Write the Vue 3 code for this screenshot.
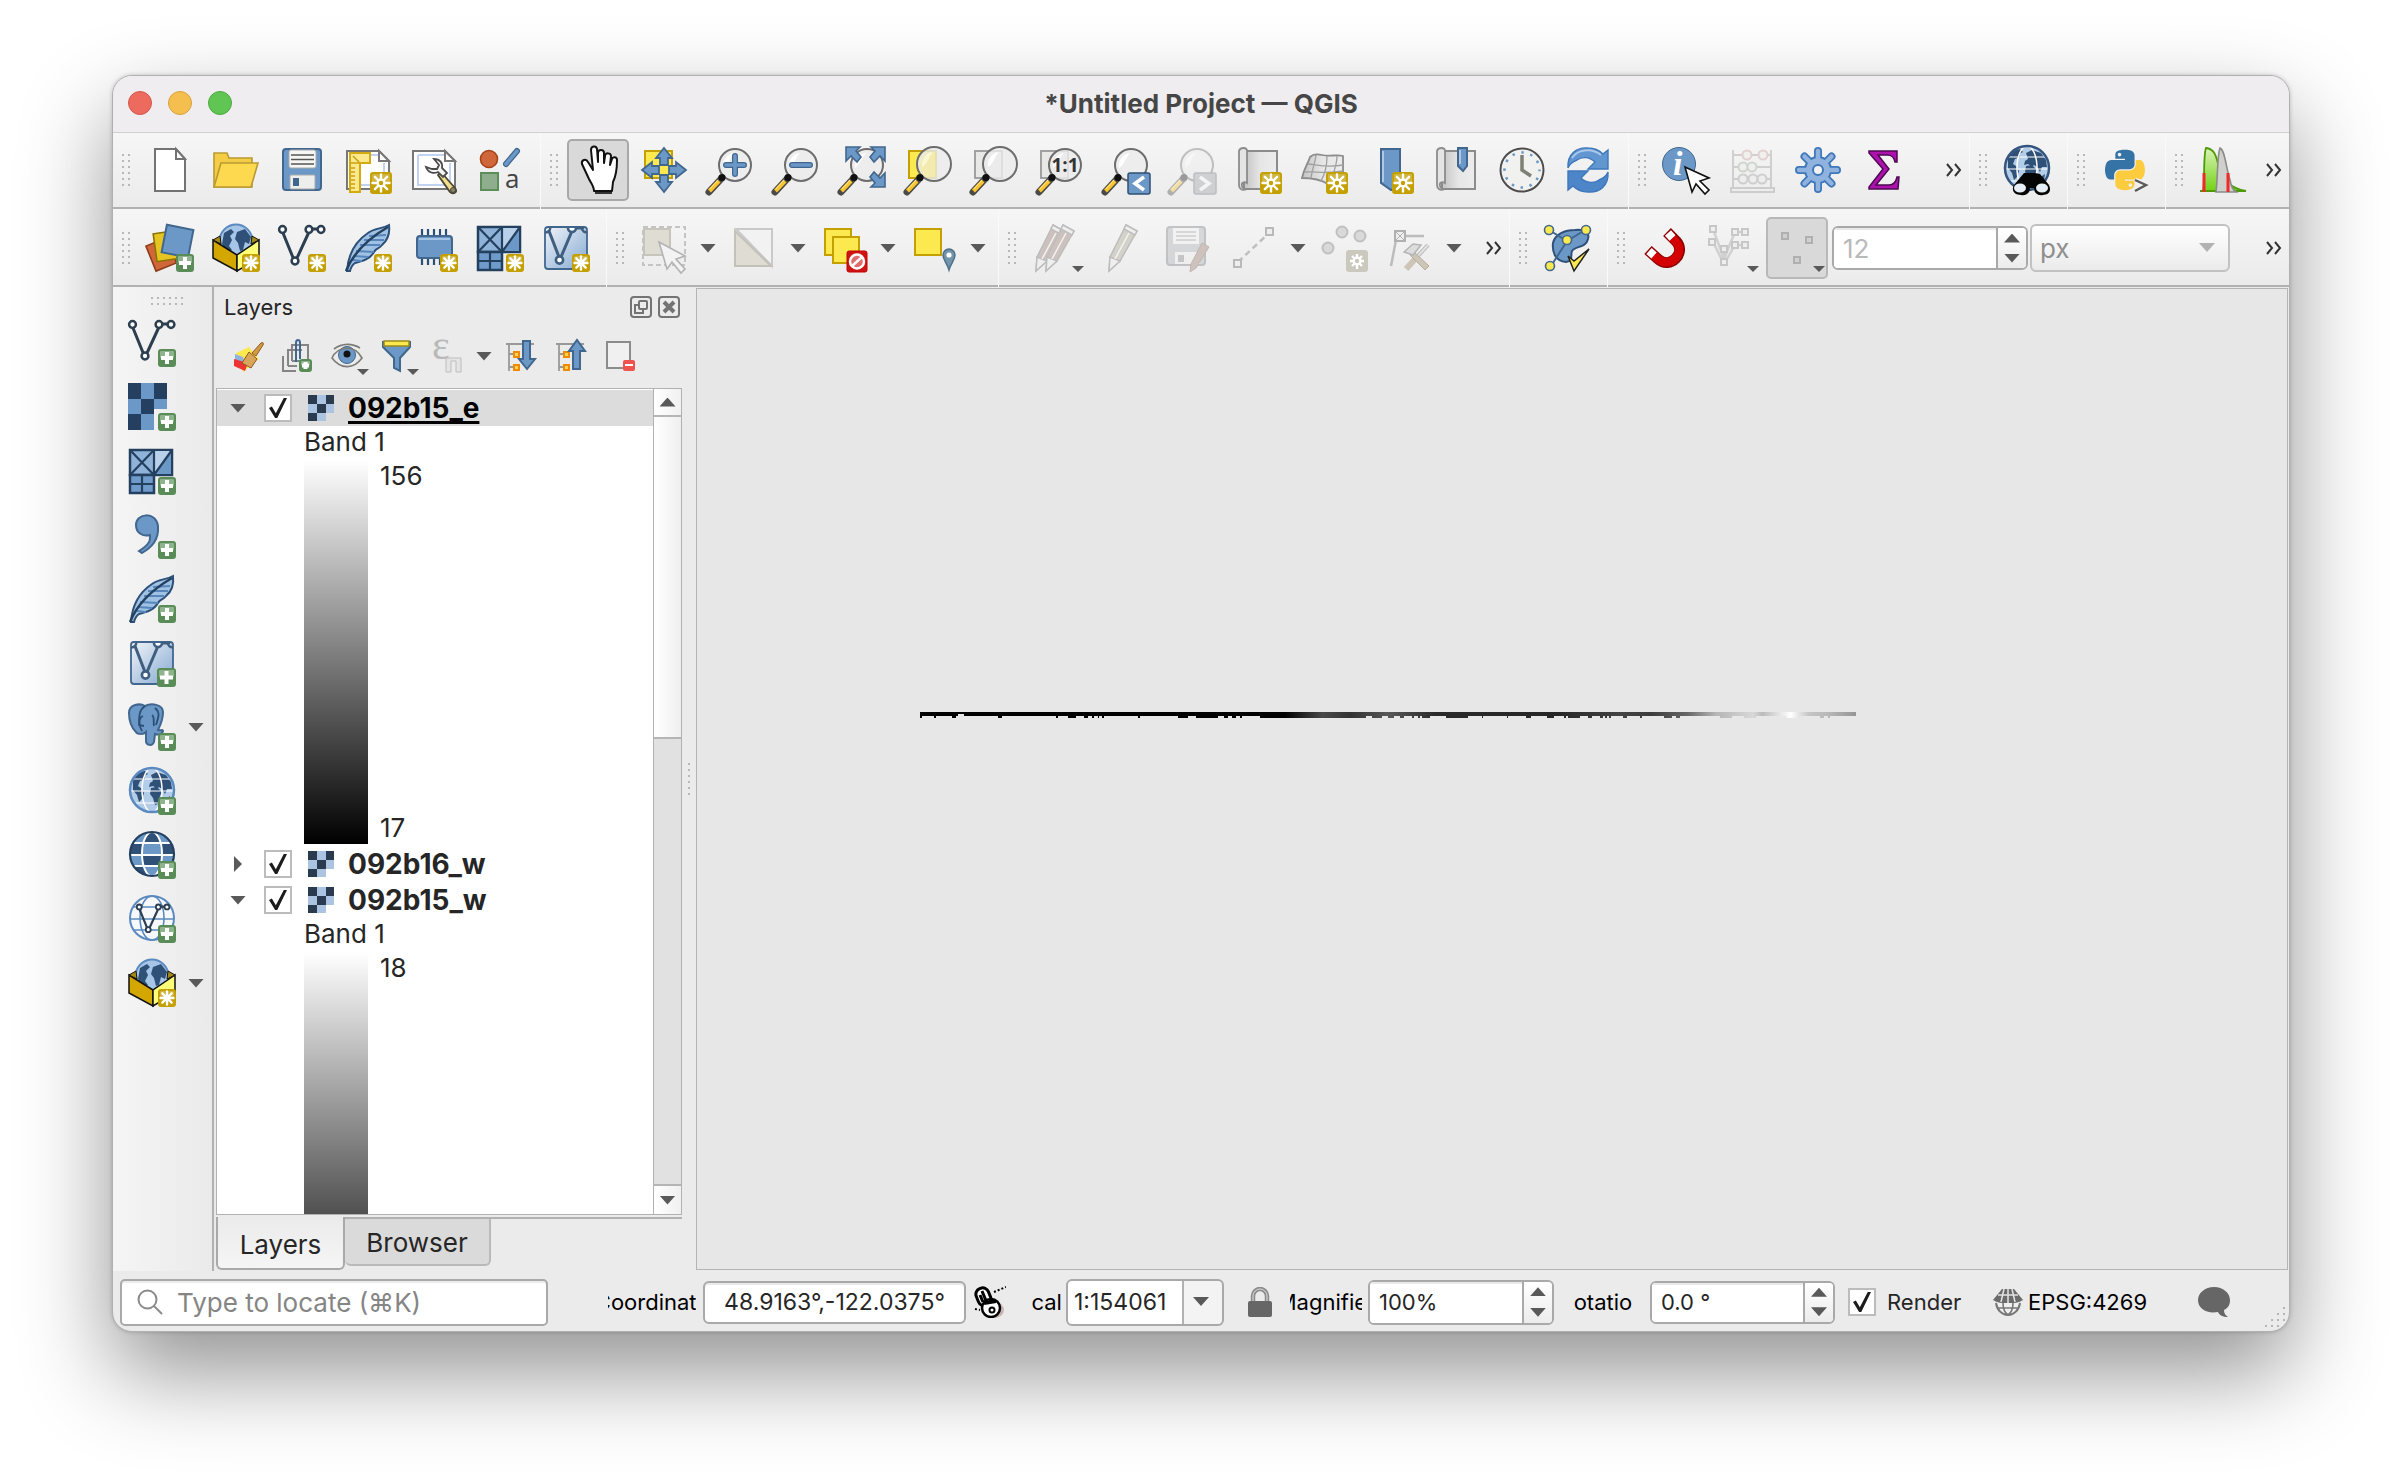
<script setup>
import { ref } from 'vue'

/* ---------- shared pieces of the icon artwork ---------- */
const blue = 'fill="#6b98c6" stroke="#41678f" stroke-width="2"'
const line = (c, w) => `fill="none" stroke="${c}" stroke-width="${w}"`

const plus = (x = 30, y = 30, s = 18) => {
  const m = s / 2
  return `<rect x="${x}" y="${y}" width="${s}" height="${s}" rx="3" fill="#5a8c57"/>
  <rect x="${x + 2}" y="${y + 2}" width="${s - 4}" height="${m - 2}" rx="1" fill="#8fb38d"/>
  <path d="M${x + m} ${y + 3}v${s - 6}M${x + 3} ${y + m}h${s - 6}" stroke="#fff" stroke-width="4"/>`
}
const star = (x = 30, y = 30, s = 18) => {
  const cx = x + s / 2, cy = y + s / 2, r = s / 2 - 2.5, d = r * 0.72
  return `<rect x="${x}" y="${y}" width="${s}" height="${s}" rx="3" fill="#c4a000"/>
  <rect x="${x + 2}" y="${y + 2}" width="${s - 4}" height="${s / 2 - 2}" rx="1" fill="#d0b440"/>
  <path d="M${cx} ${cy - r}v${2 * r}M${cx - r} ${cy}h${2 * r}M${cx - d} ${cy - d}l${2 * d} ${2 * d}M${cx + d} ${cy - d}l${-2 * d} ${2 * d}" stroke="#fff" stroke-width="2.4" stroke-linecap="round"/>`
}
const gearBadge = (x = 26, y = 26) => `${star(x, y, 22)}
  <circle cx="${x + 11}" cy="${y + 11}" r="3.4" fill="#c4a000" stroke="#fff" stroke-width="2.4"/>`

const lens = (cx = 29, cy = 19, r = 16) => `
  <path d="M15 33 3 46" stroke="#4a4a4a" stroke-width="7" stroke-linecap="round"/>
  <path d="M13 35 3.500 45" stroke="#fcc42c" stroke-width="4"/>
  <path d="M12 34 4 43" stroke="#fdeaa0" stroke-width="1"/>
  <circle cx="${cx}" cy="${cy}" r="${r}" fill="#ececec" fill-opacity=".82" stroke="#6d6d6d" stroke-width="2"/>
  <path d="M${cx - 12} ${cy + 3}a12 13 0 0 1 11-15c-5 5-5 12-11 15" fill="#fff" opacity=".9"/>
  <circle cx="16" cy="31.500" r="3.600" fill="#111"/>`

const land = `
  <path d="M5 13c3-6 9-9 12-9l3 3-4 2 1 3-5 2-2 5 3 2 3 5-2 6-3 3-2-7-4-5zM23 8l6-3 9 3 5 7 1 7-5 0-2 5-3-5-3-2-2 2-4-3-4 1 1-4 3-2zM23 21l6-1 5 5-2 4-2 8-3 1-2-7-3-4zM39 31l3-2-1 6-3 1z" fill="#2f5178"/>`
const globe = (ring = '#5a8ac0') => `
  <circle cx="24" cy="23" r="22" fill="#b3cde9"/>${land}
  <ellipse cx="24" cy="23" rx="10" ry="22" ${line('#fff', 1.5)}/>
  <path d="M2 24h44M6 12h36M6 36h36" ${line('#fff', 1.2)}/>
  <circle cx="24" cy="23" r="22" ${line(ring, 2.5)}/>`

const box = `
  <circle cx="24" cy="17" r="16.500" fill="#a7c5e6" stroke="#5a8ac0" stroke-width="2"/>
  <path d="M12 9l7-4 3 3-4 4 2 4-3 6 3 4-4 3-6-9zM25 8l8-3 6 8-2 7-4-2-2 8-3 1-2-8-3-4z" fill="#2f5178"/>
  <path d="M1 16l24 15v16L1 34z" fill="#d3a600" stroke="#111" stroke-width="1.500"/>
  <path d="M47 16L25 31v16l22-13z" fill="#ffff78" stroke="#111" stroke-width="1.500"/>
  <path d="M1 16l7-4 1 8zM47 16l-7-4-1 8z" fill="#a58a18" stroke="#111" stroke-width="1"/>`

const vee = `
  <path d="M5 9l11 27M19 34L31 8M34 5h7" ${line('#2c3e50', 3)}/>
  <g fill="#fff" stroke="#2c3e50" stroke-width="2.500"><circle cx="4.500" cy="5.500" r="3.400"/><circle cx="17" cy="37" r="3.400"/><circle cx="31" cy="5.500" r="3.400"/><circle cx="43" cy="5.500" r="3.400"/></g>`

const feather = `
  <path d="M3 47C4 32 9 19 24 9c6-5 14-4 21-8 1 8-1 15-7 20-3 4-6 3-8 7-4 7-11 9-19 11-3 2-4 4-5 8z" fill="#9fc1e4" stroke="#2c4f78" stroke-width="2"/>
  <path d="M12 27l18 1M16 21l20 0M20 16l20 0M25 12l17-1M10 32l14 1M9 36l9 1" ${line('#5686bb', 2)}/>
  <path d="M2 47C8 32 20 17 44 3" ${line('#24415f', 2.5)}/>`

const mesh = `
  <rect x="2" y="3" width="42" height="25" fill="#8fb2d8" stroke="#24405f" stroke-width="2.500"/>
  <path d="M27 4h16L27 27z" fill="#b8d0ea"/><path d="M43 5v22H28z" fill="#6b98c6"/>
  <rect x="2" y="28" width="24" height="18" fill="#6f9bcb" stroke="#24405f" stroke-width="2.500"/>
  <path d="M2 3l24 25M2 28L26 3M26 28L44 3M26 3v25M14 28v18M2 37h24" ${line('#24405f', 2.2)}/>`

const virtualLayer = `
  <rect x="3" y="3" width="42" height="42" rx="3" fill="url(#virtualFill)" stroke="#41678f" stroke-width="1.800"/>
  <path d="M7 7l10 26M19 33L30 7M33 4h9" ${line('#3e5f80', 3)}/>
  <g fill="#fff" stroke="#3e5f80" stroke-width="2.600"><path d="M3 8a4 4 0 0 0 5-5M26 4a4 4 0 0 0 8 0M40 4a4 4 0 0 0 5 4"/><circle cx="17.500" cy="36" r="3.600"/></g>`

const pencil = (dx = 0, fill = '#d4d2c8') => `
  <g transform="translate(${dx} 0)" stroke="#bdbdbd" stroke-width="1.500">
  <path d="M28 1l11 6-17 30-11 10 1-14z" fill="${fill}"/><path d="M28 1l11 6-2 4-11-6zM12 33l10 4-11 10z" fill="#efefef"/><path d="M31 9L17 35" fill="none" stroke="#f2f2f2"/></g>`

const scroll = `
  <path d="M10 5h33v38H10z" fill="url(#greyFill)" stroke="#8c8c8c" stroke-width="2"/>
  <path d="M5 5c1-4 8-4 8 0v32c-3-2-6 0-5 3 0 2 3 3 5 3-5 2-8 0-8-4z" fill="#e4e4e4" stroke="#8c8c8c" stroke-width="1.800"/>`

const page = `
  <path d="M3 5h32l10 10v28H3z" fill="#fff" stroke="#777" stroke-width="2"/>
  <path d="M8 9h26M8 9v30h32V17" ${line('#c1d2f2', 2)}/><path d="M35 5v10h10z" fill="#fff" stroke="#777" stroke-width="2"/>`

const upArrow = '<path d="M24 2l8 10h-4v7h-8v-7h-4z"/>'

const icons = {
  newDoc: `<path d="M9 3h21l9 10v32H9z" fill="#fff" stroke="#737373" stroke-width="2"/><path d="M30 3v10h9z" fill="#fff" stroke="#737373" stroke-width="2"/>`,
  open: `<path d="M2 41V7h13l2 5h23v29z" fill="#f3cd45" stroke="#b99a32" stroke-width="1.600"/><path d="M9 17h37l-7 24H2z" fill="#fcd94f" stroke="#b99a32" stroke-width="1.600"/>`,
  save: `<rect x="5" y="3" width="38" height="41" rx="3" ${blue}/><rect x="11" y="4" width="27" height="18" rx="2" fill="#f6f6f4" stroke="#aaa"/>
    <path d="M13 9h23M13 13.500h23M13 18h23" ${line('#555', 1.6)}/><rect x="12" y="29" width="25" height="14" rx="1" fill="#eeeeec" stroke="#aaa"/><rect x="15" y="32" width="6" height="8" fill="#41678f"/>`,
  layoutNew: `${page}<path d="M6 7h20v10H16v29H6z" fill="#fce98e" stroke="#d3ab10" stroke-width="2"/><path d="M7 17l8 0M9 10l6 6M7 22h4M7 26h4M7 30h4M7 34h4M7 38h4M7 42h4" ${line('#c9a211', 1.5)}/>${gearBadge()}`,
  layouts: `${page}<path d="M31 26l14 16c3 4-1 7-5 4L28 29z" fill="#f0dc8c" stroke="#4a4636" stroke-width="1.800"/>
    <path d="M16 21c2 6 8 7 12 5l5 5 4-4-5-5c1-5-2-9-8-9l5 6-2 4-5 0z" fill="#f4f4f4" stroke="#4c4c4c" stroke-width="1.800"/><circle cx="43" cy="44" r="2.500" fill="#8a8468" stroke="#4a4636"/>`,
  styles: `<circle cx="13" cy="13" r="8.500" fill="#d0673a" stroke="#a8441a" stroke-width="1.600"/><path d="M30 18L41 5" stroke="#41678f" stroke-width="6" stroke-linecap="round"/><path d="M30 18L41 5" stroke="#6b98c6" stroke-width="3.500" stroke-linecap="round"/>
    <rect x="5" y="27" width="17" height="17" fill="#8fae8d" stroke="#5c8e5a" stroke-width="2"/><text x="29" y="42" font-family="Open Sans, sans-serif" font-size="26" fill="#444">a</text>`,
  hand: `<path d="M20 45c0-5-3-8-5-12L8 18c-1-4 4-6 6-2l5 8-2-20c0-4 5-5 6-1l1 13V7c0-4 6-4 6 0v10l1-7c0-4 6-3 6 0l-1 9 2-6c1-3 5-2 5 1 0 8-1 16-4 22l-1 9z" fill="#fff" stroke="#111" stroke-width="2" stroke-linejoin="round"/><path d="M21 47h17" stroke="#333" stroke-width="2"/>`,
  panSel: `<rect x="5" y="5" width="27" height="27" fill="#fce94f" stroke="#c4a000" stroke-width="2"/><g fill="#6b98c6" stroke="#41678f" stroke-width="1.800">${upArrow}<g transform="rotate(90 24 24)">${upArrow}</g><g transform="rotate(180 24 24)">${upArrow}</g><g transform="rotate(270 24 24)">${upArrow}</g></g>`,
  zoomIn: `${lens()}<path d="M29 10v18M20 19h18" stroke="#41678f" stroke-width="6" stroke-linecap="round"/><path d="M29 10v18M20 19h18" stroke="#6b98c6" stroke-width="3.500" stroke-linecap="round"/>`,
  zoomOut: `${lens()}<path d="M20 19h18" stroke="#41678f" stroke-width="6" stroke-linecap="round"/><path d="M20 19h18" stroke="#6b98c6" stroke-width="3.500" stroke-linecap="round"/>`,
  zoomFull: `${lens()}<g fill="#6b98c6" stroke="#41678f" stroke-width="1.600"><path d="M8 1h14l-4 4 5 6-4 5-6-6-5 5z"/><path d="M47 1H33l4 4-5 6 4 5 6-6 5 5z"/><path d="M47 41H33l4-4-5-6 4-5 6 6 5-5z"/></g>`,
  zoomSel: `<rect x="5" y="5" width="27" height="27" fill="#fce94f" stroke="#c4a000" stroke-width="2"/>${lens(30, 18, 17)}<path d="M28 6h4v25h-10c-8-6-8-20 6-25z" fill="#fce94f" opacity=".25"/>`,
  zoomLayer: `<rect x="5" y="5" width="27" height="27" fill="#e8e8e6" stroke="#999" stroke-width="1.800"/>${lens(30, 18, 17)}`,
  zoomNative: `<rect x="5" y="5" width="27" height="27" fill="#e8e8e6" stroke="#999" stroke-width="1.800"/>${lens()}<text x="29" y="26" text-anchor="middle" font-family="Open Sans, sans-serif" font-weight="700" font-size="19" fill="#333">1:1</text>`,
  zoomLast: `${lens()}<rect x="26" y="27" width="22" height="21" rx="2" fill="#6b98c6" stroke="#2f4f73" stroke-width="1.500"/><path d="M42 31l-9 6.500 9 6.500" ${line('#fff', 3.5)}/>`,
  zoomNext: `${lens()}<rect x="26" y="27" width="22" height="21" rx="2" fill="#9aa0a6" stroke="#6d7276" stroke-width="1.500"/><path d="M32 31l9 6.500-9 6.500" ${line('#fff', 3.5)}/>`,
  newMap: `${scroll}${gearBadge()}`,
  new3d: `<path d="M2 32C4 22 8 18 10 11c3-3 8-3 12-2 8 2 14-1 21 1v20L28 38C20 33 10 32 2 32z" fill="url(#greyFill)" stroke="#8c8c8c" stroke-width="1.800"/><path d="M8 18c10 1 20 4 35 1M5 26c10-1 18 2 38-1M16 9c-1 8-4 15-5 23M27 10c0 9-2 18-6 25M37 10c0 9-3 14-6 26" ${line('#a0a0a0', 1.3)}/>${gearBadge()}`,
  bookmarkNew: `<path d="M15 3h19v36l-9 5-10-7z" ${blue}/><path d="M17 5v31" stroke="#c6d9ee" stroke-width="1.500"/>${gearBadge()}`,
  bookmarks: `${scroll}<path d="M26 2h9v18l-4 5-5-5z" ${blue}/><path d="M28 4v14" stroke="#c6d9ee" stroke-width="1.500"/>`,
  clock: `<circle cx="24" cy="24" r="21.500" fill="#f1f1ef" stroke="#4c4c4c" stroke-width="2"/><circle cx="24" cy="24" r="17.500" fill="none" stroke="#6b98c6" stroke-width="2.500" stroke-dasharray="2.500 6.660" stroke-dashoffset="1.200"/><path d="M24 9v15l9 6" ${line('#7d8075', 3.5)}/>`,
  refresh: `<path d="M4 22C3 8 13 1 24 2c8 0 12 3 15 6l5-4v19H24l7-7c-6-6-14-5-18-2-5 2-8 5-9 8z" fill="#6296d0" stroke="#3f78ba" stroke-width="1.400"/><path d="M44 26c1 14-9 21-20 20-8 0-12-3-15-6l-5 4V25h20l-7 7c6 6 14 5 18 2 5-2 8-5 9-8z" fill="#4d86c8" stroke="#3f78ba" stroke-width="1.400"/><path d="M8 12c5-8 19-11 29-3" ${line('#a9c8ea', 2)}/>`,
  identify: `<circle cx="17" cy="18" r="16.500" fill="#6b98c6" stroke="#41678f"/><text x="11" y="29" font-family="Liberation Serif, serif" font-style="italic" font-weight="700" font-size="34" fill="#fff">i</text><path d="M23 21l24 11-9 3 9 9-4 4-9-10-4 8z" fill="#fff" stroke="#111" stroke-width="1.600"/>`,
  abacus: `<g fill="none" stroke="#999" stroke-width="2"><path d="M5 4v38M43 4v38M5 9h38M5 21h38M5 33h38"/><rect x="3" y="42" width="43" height="4"/></g><g fill="#ececea" stroke="#999" stroke-width="2"><circle cx="19" cy="9" r="4.500" stroke="#c99a9a"/><circle cx="35" cy="9" r="4.500" stroke="#c99a9a"/><circle cx="15" cy="21" r="4.500" stroke="#9aa896"/><circle cx="24" cy="21" r="4.500" stroke="#9aa896"/><circle cx="15" cy="33" r="4.500"/><circle cx="25" cy="33" r="4.500"/><circle cx="34" cy="33" r="4.500"/></g>`,
  gear: `<g stroke="#3f78ba" stroke-width="8" stroke-linecap="round"><path d="M24 5v38M5 24h38M10.500 10.500l27 27M37.500 10.500l-27 27"/></g><circle cx="24" cy="24" r="14" fill="#3f78ba"/><g stroke="#8fb2de" stroke-width="4.500" stroke-linecap="round"><path d="M24 5v38M5 24h38M10.500 10.500l27 27M37.500 10.500l-27 27"/></g><circle cx="24" cy="24" r="12" fill="#8fb2de"/><circle cx="24" cy="24" r="5" fill="#f1f1f1" stroke="#3f78ba" stroke-width="2"/>`,
  sigma: `<path d="M9 5h28v11h-2c-1-5-3-7-8-7H18l11 14-13 16h13c5 0 7-3 8-8h2l-1 12H9v-2l14-18L9 7z" fill="#ad12ad" stroke="#4d0a52" stroke-width="1.500"/>`,
  metasearch: `<g transform="translate(0 -1)">${globe('#33557f')}</g><path d="M21 27l6 0 5 0 5 1 9 11c3 7-1 10-6 10-5 1-9-2-9-7h-4c0 5-4 8-9 7-7 0-10-5-7-10z" fill="#050505"/><ellipse cx="17" cy="42" rx="6" ry="4.500" fill="#e8eef5"/><ellipse cx="39" cy="42" rx="6" ry="4.500" fill="#e8eef5"/>`,
  python: `<g transform="translate(-1 3) scale(.39)"><path fill="#3572a5" d="M63.391 1.988c-4.222.02-8.252.379-11.800 1.007-10.450 1.846-12.346 5.710-12.346 12.837v9.411h24.693v3.137H29.977c-7.176 0-13.460 4.313-15.426 12.521-2.268 9.405-2.368 15.275 0 25.096 1.755 7.311 5.947 12.519 13.124 12.519h8.491V67.234c0-8.151 7.051-15.340 15.426-15.340h24.665c6.866 0 12.346-5.654 12.346-12.548V15.833c0-6.693-5.646-11.720-12.346-12.837-4.244-.706-8.645-1.027-12.866-1.008zM50.037 9.557c2.550 0 4.634 2.117 4.634 4.721 0 2.593-2.083 4.690-4.634 4.690-2.560 0-4.633-2.097-4.633-4.690-.001-2.604 2.073-4.721 4.633-4.721z"/><path fill="#fdcb3e" d="M91.682 28.380v10.966c0 8.500-7.208 15.655-15.426 15.655H51.591c-6.756 0-12.346 5.783-12.346 12.549v23.515c0 6.691 5.818 10.628 12.346 12.547 7.816 2.297 15.312 2.713 24.665 0 6.216-1.801 12.346-5.423 12.346-12.547v-9.412H63.938v-3.138h37.012c7.176 0 9.852-5.005 12.348-12.519 2.578-7.735 2.467-15.174 0-25.096-1.774-7.145-5.161-12.521-12.348-12.521h-9.268zM77.809 87.927c2.561 0 4.634 2.097 4.634 4.692 0 2.602-2.074 4.719-4.634 4.719-2.550 0-4.633-2.117-4.633-4.719 0-2.595 2.083-4.692 4.633-4.692z"/></g><path d="M34 34l11 5-11 6" ${line('#f1f1f1', 5)}/><path d="M34 34l11 5-11 6" ${line('#5a5a5a', 2.4)}/>`,
  histogram: `<path d="M1 45h3C6 38 4 10 7 2c8 1 10 7 12 16 4 16 14 25 28 27z" fill="url(#greenFill)" stroke="#4e9a06" stroke-width="1.800"/><path d="M17 46C19 30 18 10 21 2c5 2 6 20 10 32 1 6 3 10 6 12z" fill="#cfd0cc" stroke="#8a8c87" stroke-width="1.600"/><path d="M5 27v19M29 27v19" stroke="#ef2929" stroke-width="3"/>`,

  dataSource: `<g stroke-width="1.600"><rect x="4" y="17" width="22" height="27" fill="#d0673a" stroke="#8f3c18" transform="rotate(-22 15 30)"/><rect x="9" y="8" width="24" height="28" fill="#e6c422" stroke="#8c7400" transform="rotate(-8 21 22)"/><rect x="18" y="3" width="27" height="28" ${blue} transform="rotate(11 31 17)"/></g>${plus()}`,
  gpkg: `${box}${star()}`,
  shape: `${vee}${star()}`,
  spatialite: `${feather}${star()}`,
  chip: `<path d="M12 5v36M18 5v36M24 5v36M30 5v36M36 5v36" ${line('#2c4f78', 2.2)}/><rect x="7" y="12" width="35" height="22" rx="3" ${blue}/><path d="M9 15h31" stroke="#a4c2e2" stroke-width="2"/>${star()}`,
  meshNew: `${mesh}${star()}`,
  virtualNew: `${virtualLayer}${star()}`,
  select: `<rect x="3" y="3" width="42" height="38" fill="none" stroke="#c4c4c4" stroke-width="2" stroke-dasharray="5 3"/><rect x="4" y="5" width="26" height="26" fill="#dedcd3" stroke="#c6c4bb" stroke-width="2"/><path d="M19 18l26 14-9 3 9 10-4 4-9-11-5 7z" fill="#f3f3f3" stroke="#b3b3b3" stroke-width="1.600"/>`,
  selectValue: `<path d="M6 5h36v37z" fill="#f2f2f2" stroke="#c9c9c9" stroke-width="2"/><path d="M5 7v35h36z" fill="#dedcd3" stroke="#c3c1b8" stroke-width="2"/>`,
  deselect: `<g fill="#fce94f" stroke="#c4a000" stroke-width="2"><rect x="5" y="5" width="26" height="26"/><rect x="13" y="13" width="26" height="26"/></g><rect x="27" y="27" width="20" height="21" rx="2" fill="#cc1414" stroke="#c00"/><circle cx="37" cy="37.500" r="7" fill="#e06c6c" stroke="#fff" stroke-width="2.500"/><path d="M32 42l10-9" stroke="#fff" stroke-width="2.500"/>`,
  selectLoc: `<rect x="5" y="5" width="26" height="26" fill="#fce94f" stroke="#c4a000" stroke-width="2"/><path d="M39 46c-2-7-6-10-6-15a6 6 0 0 1 12 0c0 5-4 8-6 15z" fill="#7295ab" stroke="#4c7088" stroke-width="1.500"/><circle cx="39" cy="31" r="2.600" fill="#fff"/>`,
  edits: `${pencil(-7, '#cdc1bd')}${pencil(3, '#cdc1bd')}`,
  pencil: pencil(),
  saveEdits: `<g opacity=".8"><rect x="3" y="3" width="38" height="38" rx="3" fill="#cdd0d3" stroke="#b4b7ba" stroke-width="2"/><rect x="9" y="4" width="26" height="16" fill="#f2f2f2"/><path d="M12 8h20M12 12h20M12 16h20" ${line('#c5c5c5', 1.6)}/><rect x="11" y="28" width="25" height="12" fill="#efefef"/><rect x="14" y="31" width="6" height="7" fill="#bbb"/></g><path d="M38 19l7 4-13 21-6 4 1-8z" fill="#cfc2bc" stroke="#bdb6b3"/>`,
  digitize: `<path d="M8 38L38 10" stroke="#bfbfbf" stroke-width="2.500" stroke-dasharray="6 4"/><g fill="#eee" stroke="#b9b9b9" stroke-width="2"><rect x="4" y="36" width="7" height="7"/><rect x="36" y="4" width="7" height="7"/></g>`,
  points: `<g fill="#d9d9d9" stroke="#c0c0c0" stroke-width="2"><circle cx="22" cy="8" r="5.500"/><circle cx="40" cy="12" r="5.500"/><circle cx="8" cy="24" r="5.500"/></g><g><rect x="26" y="26" width="22" height="22" rx="3" fill="#cbc8bd"/><path d="M37 30v15M30 37h14M32 32l10 10M42 32L32 42" stroke="#fff" stroke-width="2.400"/><circle cx="37" cy="37" r="3.400" fill="#cbc8bd" stroke="#fff" stroke-width="2.400"/></g>`,
  vertex: `<path d="M12 12h26M10 16L5 42" ${line('#bcbcbc', 2.5)}/><rect x="9" y="7" width="10" height="10" fill="#eee" stroke="#b0b0b0" stroke-width="2"/><path d="M10 8l8 8M18 8l-8 8" stroke="#b0b0b0"/><path d="M42 21L30 34" stroke="#b5b5b5" stroke-width="4"/><path d="M42 21L30 34" stroke="#e4e4e4" stroke-width="2"/><path d="M31 33L20 45" stroke="#cdc6b6" stroke-width="6"/><path d="M28 28l15 14-4 4-15-15z" fill="#cdc6b6" stroke="#b5b0a4"/><path d="M18 28l9-8 8 1-8 10z" fill="#ddd" stroke="#b5b5b5" stroke-width="1.500"/>`,
  topology: `<path d="M10 19c2-9 12-13 22-13 9-1 15 2 13 9-2 9-13 7-16 12-2 5 2 10-6 11-11-1-14-10-13-19z" fill="#6b98c6" stroke="#2f5178" stroke-width="2"/><path d="M6 6l18 11L42 6M24 17L8 42" ${line('#41678f', 2)}/><g fill="#fce94f" stroke="#41678f" stroke-width="1.600"><circle cx="6" cy="6" r="4.500"/><circle cx="43" cy="6" r="4.500"/><circle cx="24" cy="16" r="4.500"/><circle cx="7" cy="42" r="4.500"/></g><path d="M25 32l6 5 15-12-15 22z" fill="#fce94f" stroke="#222" stroke-width="1.500"/>`,
  magnet: `<path d="M7 26L17 35C29 46 46 29 35 17L26 8" ${line('#8c0000', 11)}/><path d="M8 27L17 35C29 45 45 29 35 18L27 9" ${line('#d40000', 8.5)}/><path d="M8 27l5 4.500M27 9l4.500 5" ${line('#fff', 8)}/>`,
  snapAll: `<g opacity=".8"><path d="M6 5l11 30L28 8h10M6 18l11 22L28 21h10M17 26l0 12" ${line('#c9c9c9', 2.5)}/><g fill="#eee" stroke="#bdbdbd" stroke-width="2"><rect x="3" y="2" width="6" height="6"/><rect x="25" y="5" width="6" height="6"/><rect x="35" y="5" width="6" height="6"/><rect x="2" y="15" width="6" height="6"/><rect x="25" y="18" width="6" height="6"/><rect x="35" y="18" width="6" height="6"/><rect x="14" y="22" width="6" height="6"/><rect x="14" y="35" width="6" height="6"/></g></g>`,
  snapVertex: `<g fill="#d0d0d0" stroke="#b0b0b0" stroke-width="2"><rect x="9" y="9" width="6" height="6"/><rect x="33" y="13" width="6" height="6"/><rect x="21" y="33" width="6" height="6"/></g>`,

  addVector: `${vee}${plus()}`,
  addRaster: `<path d="M0 0h39v26H26v21H0z" fill="#6b98c6"/><path d="M0 0h13v16H0zM26 0h13v16H26zM13 16h13v15H13zM0 31h13v16H0z" fill="#243f5f"/>${plus()}`,
  addMesh: `${mesh}${plus()}`,
  addCsv: `<path d="M11 40c8-5 12-9 11-16-7 2-14-2-14-10 0-12 20-14 22 1 1 14-6 21-16 27z" ${blue}/>${plus()}`,
  addSpatialite: `${feather}${plus()}`,
  addVirtual: `${virtualLayer}${plus(29, 29, 19)}`,
  addPostgis: `<path d="M1 10C1 1 12 0 17 3c6-3 18-2 18 6 0 8-3 14-5 18 3 1 5-1 5 1-1 4-6 4-8 3l-1 8c-2 5-8 3-8-1v-9c-3 3-9 2-10 0C3 24 1 16 1 10z" ${blue}/><path d="M17 3c-6 4-6 10-6 19l5 1M27 5c6 5 3 10 1 17M15 13c-5 2-4 10-1 15M24 12c3 2 1 6 2 11" ${line('#2c4f78', 1.8)}/>${plus()}`,
  addWms: `${globe()}${plus()}`,
  addWcs: `<circle cx="24" cy="23" r="22" fill="#6b98c6"/><path d="M5 12h11l-2 12H2c0-4 1-8 3-12zM32 12h11c2 4 3 8 3 12H34zM14 24h20l-2 11H16zM18 2c4-1 8-1 12 0l3 10H15zM5 35h11l4 9C12 43 8 40 5 35z" fill="#2f5178"/><path d="M2 24h44M5 12h38M5 35h38" ${line('#fff', 2)}/><ellipse cx="24" cy="23" rx="10" ry="22" ${line('#fff', 2)}/><circle cx="24" cy="23" r="22" ${line('#24405f', 2.2)}/>${plus()}`,
  addWfs: `<circle cx="24" cy="23" r="22" fill="#f6f8fb" stroke="#5a8ac0" stroke-width="2"/><path d="M2 24h44M6 12h36M6 35h36" ${line('#5a8ac0', 1.6)}/><ellipse cx="24" cy="23" rx="12" ry="22" ${line('#5a8ac0', 1.6)}/><g transform="translate(8 8) scale(.72)">${vee}</g>${plus()}`,

  brush: `<path d="M4 14l13-6 10 12-16 13z" fill="#fce94f"/><path d="M3 15l8 3 3 10-11-4z" fill="#8fb2de"/><path d="M2 20l14 4-3 8-11-5z" fill="#e33"/><path d="M20 14L29 4c2-1 3 0 2 2l-7 11z" fill="#d59a44" stroke="#8b5b1c"/><path d="M17 13l8 7-6 9-9-5z" fill="#d9a55b" stroke="#8b5b1c"/>`,
  addGroup: `<path d="M1 17v15h13M6 27V11h14M10 22V6h16v18M6 27h9M10 22h8" ${line('#858585', 2)}/><path d="M14 23V4c0-4 4-4 4 0v16" ${line('#41678f', 2)}/>${plus(17, 20, 13)}`,
  eye: `<circle cx="15" cy="16" r="8.500" fill="#6b98c6" stroke="#41678f"/><circle cx="15" cy="15" r="3.500" fill="#111"/><path d="M0 19c5-11 22-15 30 0-8 11-21 12-30 0zM2 10C10 4 20 4 28 9" ${line('#7b7b76', 1.6)}/>`,
  filter: `<path d="M1 3h27v5L18 19v13l-6-3V19L1 8z" ${blue}/><path d="M2 2h25v5H2z" fill="#fce94f" stroke="#9b8a1c" stroke-width="1.500"/>`,
  expression: `<text x="0" y="20" font-family="Liberation Serif, serif" font-size="42" fill="#b9b9b9">ε</text><path d="M14 19h15v14h-5V22h-5v11h-5z" fill="#e4e4e4" stroke="#bdbdbd"/>`,
  expand: `<path d="M0 5h28M3 5v27M3 15h7M3 28h7" ${line('#999', 1.8)}/><path d="M8 13h5v5H8zM8 26h5v5H8z" fill="#fcd34f" stroke="#f08a00" stroke-width="2"/><path d="M17 2h7v18h5l-8 10-8-10h4z" ${blue}/>`,
  collapse: `<path d="M0 5h28M3 5v27M3 15h7M3 28h7" ${line('#999', 1.8)}/><path d="M8 13h5v5H8zM8 26h5v5H8z" fill="#fcd34f" stroke="#f08a00" stroke-width="2"/><path d="M17 30h7V12h5L21 1l-8 11h4z" ${blue}/>`,
  remove: `<rect x="1" y="3" width="23" height="26" fill="#f0f0f0" stroke="#8c8c8c" stroke-width="2"/><rect x="17" y="21" width="12" height="11" rx="2" fill="#ef5350"/><path d="M19 26h8" stroke="#fff" stroke-width="2"/>`
}

/* ---------- toolbars ---------- */
const b = (icon, label, extra = {}) => ({ icon, label, ...extra })
const row1 = [
  { items: [b('newDoc', 'New Project'), b('open', 'Open Project'), b('save', 'Save Project'), b('layoutNew', 'New Print Layout'), b('layouts', 'Layout Manager'), b('styles', 'Style Manager')] },
  { items: [b('hand', 'Pan Map', { on: true }), b('panSel', 'Pan to Selection'), b('zoomIn', 'Zoom In'), b('zoomOut', 'Zoom Out'), b('zoomFull', 'Zoom Full'), b('zoomSel', 'Zoom to Selection'), b('zoomLayer', 'Zoom to Layer'), b('zoomNative', 'Zoom to Native Resolution'), b('zoomLast', 'Zoom Last'), b('zoomNext', 'Zoom Next', { dim: true }), b('newMap', 'New Map View'), b('new3d', 'New 3D Map View'), b('bookmarkNew', 'New Spatial Bookmark'), b('bookmarks', 'Show Spatial Bookmarks'), b('clock', 'Temporal Controller'), b('refresh', 'Refresh')] },
  { more: true, grow: true, items: [b('identify', 'Identify Features'), b('abacus', 'Field Calculator', { dim: true }), b('gear', 'Processing Toolbox'), b('sigma', 'Statistical Summary')] },
  { items: [b('metasearch', 'MetaSearch')] },
  { items: [b('python', 'Python Console')] },
  { more: true, items: [b('histogram', 'Histogram Stretch')] }
]
const row2 = [
  { items: [b('dataSource', 'Data Source Manager'), b('gpkg', 'New GeoPackage Layer'), b('shape', 'New Shapefile Layer'), b('spatialite', 'New SpatiaLite Layer'), b('chip', 'New Temporary Scratch Layer'), b('meshNew', 'New Mesh Layer'), b('virtualNew', 'New Virtual Layer')] },
  { items: [b('select', 'Select Features', { menu: true }), b('selectValue', 'Select by Value', { menu: true }), b('deselect', 'Deselect Features', { menu: true }), b('selectLoc', 'Select by Location', { menu: true })] },
  { more: true, items: [b('edits', 'Current Edits', { corner: true }), b('pencil', 'Toggle Editing'), b('saveEdits', 'Save Layer Edits'), b('digitize', 'Digitize', { menu: true }), b('points', 'Add Point Feature'), b('vertex', 'Vertex Tool', { menu: true })] },
  { items: [b('topology', 'Topology Checker')] },
  { more: true, grow: true, snapping: true, items: [b('magnet', 'Enable Snapping'), b('snapAll', 'Snapping Layers', { corner: true }), b('snapVertex', 'Snapping Type', { corner: true, on: true, soft: true })] }
]
const rows = [row1, row2]
const sideTools = [
  b('addVector', 'Add Vector Layer'), b('addRaster', 'Add Raster Layer'), b('addMesh', 'Add Mesh Layer'), b('addCsv', 'Add Delimited Text Layer'),
  b('addSpatialite', 'Add SpatiaLite Layer'), b('addVirtual', 'Add Virtual Layer'), b('addPostgis', 'Add PostGIS Layer', { menu: true }),
  b('addWms', 'Add WMS Layer'), b('addWcs', 'Add WCS Layer'), b('addWfs', 'Add WFS Layer'), b('gpkg', 'New GeoPackage Layer', { menu: true })
]
const panelTools = [
  b('brush', 'Layer Styling'), b('addGroup', 'Add Group'), b('eye', 'Manage Map Themes', { corner: true }), b('filter', 'Filter Legend', { corner: true }),
  b('expression', 'Filter by Expression', { menu: true }), b('expand', 'Expand All'), b('collapse', 'Collapse All'), b('remove', 'Remove Layer')
]

/* ---------- layer tree ---------- */
const layers = ref([
  { name: '092b15_e', open: true, visible: true, current: true, max: '156', min: '17' },
  { name: '092b16_w', open: false, visible: true, max: '', min: '' },
  { name: '092b15_w', open: true, visible: true, max: '18', min: '' }
])
const render = ref(true)

/* empty cells along the lower edge of the raster: [start, width] */
const gaps = [[2, 12], [16, 16], [36, 42], [82, 54], [138, 10], [156, 8], [168, 4], [174, 4], [179, 3], [184, 34], [220, 38], [268, 8], [298, 6], [308, 4], [316, 4], [322, 4], [326, 14], [446, 6], [462, 6], [474, 6], [484, 8], [494, 4], [500, 2], [510, 16], [548, 14], [563, 24], [588, 18], [611, 16], [634, 8], [642, 2], [646, 2], [660, 8], [672, 8], [683, 2], [687, 2], [691, 12], [707, 13], [722, 22], [752, 4], [760, 40], [812, 12], [836, 30], [880, 20], [904, 4], [910, 26]]
</script>

<template>
  <div class="desktop">
    <svg class="defs" aria-hidden="true">
      <defs>
        <linearGradient id="virtualFill" x1="0" y1="0" x2="1" y2="1"><stop offset="0" stop-color="#f0f4f8" /><stop offset="1" stop-color="#85a9d2" /></linearGradient>
        <linearGradient id="greyFill"><stop offset="0" stop-color="#c4c4c4" /><stop offset=".5" stop-color="#e6e6e6" /><stop offset="1" stop-color="#ececec" /></linearGradient>
        <linearGradient id="greenFill" x1="0" y1="0" x2="0" y2="1"><stop offset="0" stop-color="#d9f3b8" /><stop offset="1" stop-color="#73d216" /></linearGradient>
      </defs>
    </svg>

    <main class="window">
      <header class="titlebar">
        <div class="lights">
          <button class="light close" aria-label="Close"></button>
          <button class="light minimise" aria-label="Minimise"></button>
          <button class="light zoom" aria-label="Zoom"></button>
        </div>
        <h1>*Untitled Project — QGIS</h1>
      </header>

      <div v-for="(row, r) in rows" :key="r" class="toolrow" :class="{ second: r === 1 }">
        <div v-for="(group, g) in row" :key="g" class="group" :class="{ grow: group.grow }">
          <span class="handle"></span>
          <div v-for="item in group.items" :key="item.label" class="toolwrap">
            <button class="tool" :class="{ on: item.on, soft: item.soft }" :aria-label="item.label">
              <svg class="icon" :class="{ dim: item.dim }" viewBox="0 0 48 48" v-html="icons[item.icon]"></svg>
              <i v-if="item.corner" class="tri corner"></i>
            </button>
            <button v-if="item.menu" class="drop" :aria-label="item.label + ' menu'"><i class="tri"></i></button>
          </div>
          <template v-if="group.snapping">
            <div class="spin tolerance">
              <input type="text" value="12" disabled aria-label="Snapping tolerance" />
              <div class="steps"><button aria-label="Increase tolerance"><i class="tri up"></i></button><button aria-label="Decrease tolerance"><i class="tri"></i></button></div>
            </div>
            <div class="combo units">
              <select disabled aria-label="Snapping units"><option>px</option></select><i class="tri pale"></i>
            </div>
          </template>
          <button v-if="group.more" class="more" aria-label="More tools">
            <svg viewBox="0 0 18 14"><path d="M2 1l5 6-5 6M10 1l5 6-5 6" fill="none" stroke="#333" stroke-width="2" /></svg>
          </button>
        </div>
      </div>

      <section class="body">
        <nav class="side" aria-label="Add layers">
          <span class="handle flat"></span>
          <div v-for="item in sideTools" :key="item.label" class="toolwrap">
            <button class="tool" :aria-label="item.label"><svg class="icon" viewBox="0 0 48 48" v-html="icons[item.icon]"></svg></button>
            <button v-if="item.menu" class="drop" :aria-label="item.label + ' menu'"><i class="tri"></i></button>
          </div>
        </nav>

        <aside class="panel">
          <header class="panelhead">
            <h2>Layers</h2>
            <button aria-label="Float panel"><svg viewBox="0 0 22 22"><rect x="1" y="1" width="20" height="20" rx="3" /><rect x="9" y="5" width="8" height="8" rx="1" /><path d="M8 9H5v8h8v-3" /></svg></button>
            <button aria-label="Close panel"><svg viewBox="0 0 22 22"><rect x="1" y="1" width="20" height="20" rx="3" /><path class="heavy" d="M6 6l10 10M16 6L6 16" /></svg></button>
          </header>
          <div class="paneltools">
            <div v-for="item in panelTools" :key="item.label" class="toolwrap">
              <button class="tool small" :aria-label="item.label"><svg class="icon" viewBox="0 0 32 34" v-html="icons[item.icon]"></svg><i v-if="item.corner" class="tri corner"></i></button>
              <button v-if="item.menu" class="drop" :aria-label="item.label + ' menu'"><i class="tri"></i></button>
            </div>
          </div>

          <div class="treeframe">
            <ul class="tree">
              <li v-for="layer in layers" :key="layer.name">
                <div class="layer" :class="{ current: layer.current }">
                  <button class="twist" :aria-label="'Toggle ' + layer.name" @click="layer.open = !layer.open"><i class="tri" :class="{ right: !layer.open }"></i></button>
                  <input :id="layer.name" v-model="layer.visible" type="checkbox" />
                  <svg class="raster" viewBox="0 0 26 26"><path d="M0 0h26v18h-8v8H0z" fill="#aac4e2" /><path d="M0 0h9v9H0zM18 0h8v9h-8zM9 9h9v9H9zM0 18h9v8H0z" fill="#2b3b4f" /></svg>
                  <label :for="layer.name">{{ layer.name }}</label>
                </div>
                <div v-if="layer.open" class="legend">
                  <p>Band 1</p>
                  <div class="ramp"><div class="scale"></div><div class="range"><span>{{ layer.max }}</span><span>{{ layer.min }}</span></div></div>
                </div>
              </li>
            </ul>
            <div class="scrollbar">
              <button aria-label="Scroll up"><i class="tri up"></i></button>
              <div class="track"><div class="thumb"></div></div>
              <button class="down" aria-label="Scroll down"><i class="tri"></i></button>
            </div>
          </div>
          <div class="tabs" role="tablist">
            <button class="tab active" role="tab" aria-selected="true">Layers</button>
            <button class="tab" role="tab" aria-selected="false">Browser</button>
          </div>
        </aside>

        <div class="splitter"></div>

        <div class="canvas">
          <div class="strip">
            <svg viewBox="0 0 936 6" preserveAspectRatio="none" shape-rendering="crispEdges">
              <g fill="#e7e7e7"><rect v-for="gap in gaps" :key="gap[0]" :x="gap[0]" y="4" :width="gap[1]" height="2" /><rect x="38" y="2" width="6" height="4" /></g>
            </svg>
          </div>
        </div>
      </section>

      <footer class="status">
        <div class="locate">
          <svg viewBox="0 0 26 26"><circle cx="10.500" cy="10.500" r="9" /><path d="M17 17l8 8" /></svg>
          <input type="text" placeholder="Type to locate (⌘K)" aria-label="Locate" />
        </div>
        <label class="clip coord" for="coord"><span>Coordinate</span></label>
        <input id="coord" class="field" type="text" value="48.9163°,-122.0375°" />
        <button class="mouse" aria-label="Toggle extents">
          <svg viewBox="0 0 32 32"><ellipse cx="20" cy="24" rx="10" ry="8" fill="#c9b3b3" /><rect x="3" y="2" width="13" height="18" rx="6" transform="rotate(-22 9 11)" fill="#fff" stroke="#000" stroke-width="3" /><path d="M8 5l5 12M6 9l3 7" stroke="#000" stroke-width="3" /><circle cx="17" cy="22" r="9" fill="#fff" stroke="#000" stroke-width="2.500" /><circle cx="18" cy="24" r="2.500" fill="none" stroke="#000" stroke-width="2" /><path d="M10 17l12-2" stroke="#000" stroke-width="4" /><path d="M20 6l12-5M1 23l5 1" stroke="#000" stroke-width="2" stroke-dasharray="2 2" /></svg>
        </button>
        <label class="clip scalelabel" for="scale"><span>Scale</span></label>
        <div class="combo scalebox">
          <select id="scale"><option>1:154061</option></select><i class="tri"></i>
        </div>
        <button class="lock" aria-label="Lock scale">
          <svg viewBox="0 0 24 30"><path d="M5 15V9a7 7 0 0 1 14 0v6" fill="none" stroke="#8b8b8b" stroke-width="4.500" /><path d="M5 15V9a7 7 0 0 1 14 0v6" fill="none" stroke="#ddd" stroke-width="1" /><rect y="14" width="24" height="16" rx="2" fill="#666" /></svg>
        </button>
        <label class="clip maglabel" for="magnifier"><span>Magnifier</span></label>
        <div class="spin mag">
          <input id="magnifier" type="text" value="100%" />
          <div class="steps"><button aria-label="Increase magnifier"><i class="tri up"></i></button><button aria-label="Decrease magnifier"><i class="tri"></i></button></div>
        </div>
        <label class="clip rotlabel" for="rotation"><span>Rotation</span></label>
        <div class="spin rot">
          <input id="rotation" type="text" value="0.0 °" />
          <div class="steps"><button aria-label="Rotate clockwise"><i class="tri up"></i></button><button aria-label="Rotate anticlockwise"><i class="tri"></i></button></div>
        </div>
        <div class="render"><input id="render" v-model="render" type="checkbox" /><label for="render">Render</label></div>
        <button class="crs">
          <svg viewBox="0 0 32 28"><path d="M10 1h12l9 11c-8 5-22 5-30 0z" fill="#6b6b6b" /><path d="M4 15c1 7 6 12 12 12s11-5 12-12" fill="#f0f0f0" stroke="#777" stroke-width="2" /><path d="M12 1L9 14M20 1l3 13M16 1v14M6 7h20" fill="none" stroke="#e4e4e4" stroke-width="1.500" /><path d="M11 15c0 6 2 10 5 12 3-2 5-6 5-12M5 20h22" fill="none" stroke="#777" stroke-width="1.600" /></svg>
          <span>EPSG:4269</span>
        </button>
        <button class="bubble" aria-label="Messages">
          <svg viewBox="0 0 32 30"><path d="M16 0c9 0 16 6 16 13 0 5-2 8-6 10 0 3 1 5 4 7-5 0-9-2-10-5C9 27 0 22 0 13 0 6 7 0 16 0z" fill="#666" /></svg>
        </button>
        <svg class="grip" viewBox="0 0 22 22"><path d="M19 1h2v2h-2zM13 7h2v2h-2zM19 7h2v2h-2zM7 13h2v2H7zM13 13h2v2h-2zM19 13h2v2h-2zM1 19h2v2H1zM7 19h2v2H7zM13 19h2v2h-2z" fill="#b5b5b5" /></svg>
      </footer>
    </main>
  </div>
</template>

<style>
body { background: #fff; }
</style>

<style scoped>
* { box-sizing: border-box; }
.desktop { display: flex; height: 100vh; padding: 75px 112px 148px; font-family: Inter, "Noto Sans", "Noto Sans CJK JP", sans-serif; font-size: 26px; color: #262626; }
.defs { position: absolute; width: 0; height: 0; }
button { padding: 0; border: 0; background: none; font: inherit; color: inherit; }
input, select { font: inherit; color: inherit; }
h1, h2, p, ul { margin: 0; padding: 0; list-style: none; }

.window { flex: 1; min-width: 0; display: flex; flex-direction: column; overflow: hidden; border: 1px solid #b0b0b0; border-radius: 20px; background: #ebebeb; box-shadow: 0 40px 90px rgba(0, 0, 0, .43), 0 0 4px rgba(0, 0, 0, .2); }

.titlebar { display: grid; grid-template-columns: 1fr auto 1fr; align-items: center; flex: none; height: 57px; padding: 0 15px 2px; border-bottom: 1px solid #d0d0d0; background: #efedef; }
.lights { display: flex; gap: 16px; }
.light { width: 24px; height: 24px; border-radius: 50%; border: 1px solid; }
.close { background: #ec6a5e; border-color: #d55549; }
.minimise { background: #f5bf4f; border-color: #d8a13a; }
.zoom { background: #61c554; border-color: #4cab3f; }
h1 { font-size: 26px; font-weight: 700; color: #464646; }

.toolrow { display: flex; gap: 1px; flex: none; height: 76px; background: #fafafa; }
.toolrow.second { height: 78px; }
.group { display: flex; align-items: center; gap: 4px; padding-right: 9px; border-bottom: 2px solid #b1b1b1; background: linear-gradient(#f6f6f6, #ebebeb); }
.second .group { padding-top: 2px; }
.group.grow { flex: 1; }
.group:has(.more) { padding-right: 0; }
.handle { flex: none; width: 8px; height: 32px; margin: 0 5px 0 9px; background: radial-gradient(circle at 1px 1px, #b8b8b8 1px, transparent 1px) 0 0 / 6px 6px; }
.toolwrap { display: flex; align-items: center; flex: none; }
.tool { position: relative; display: grid; place-items: center; width: 62px; height: 62px; border: 2px solid transparent; border-radius: 5px; }
.tool.on { border-color: #a8a8a8; background: #d9d9d9; }
.tool.soft { border-color: #b8b8b8; }
.icon { width: 48px; height: 48px; overflow: visible; }
.icon.dim { opacity: .38; }
.tri { display: block; width: 16px; height: 9px; background: #595959; clip-path: polygon(0 0, 100% 0, 50% 100%); }
.tri.up { clip-path: polygon(50% 0, 100% 100%, 0 100%); }
.tri.right { width: 8px; height: 16px; clip-path: polygon(0 0, 100% 50%, 0 100%); }
.tri.pale { background: #b2b2b2; }
.tri.corner { position: absolute; right: 1px; bottom: 5px; width: 12px; height: 6px; }
.drop { display: grid; place-items: center; width: 24px; height: 40px; padding-left: 2px; }
.more { display: grid; place-items: center; flex: none; width: 31px; height: 40px; margin-left: auto; }
.more svg { width: 18px; height: 14px; }
.second .group:not(.grow) .more { margin-left: 9px; }

.spin { display: flex; flex: none; overflow: hidden; border: 2px solid #a9a9a9; border-radius: 6px; background: #fff; }
.spin input { flex: 1; min-width: 0; padding: 0 0 0 9px; border: 0; background: #fff; box-shadow: inset 0 2px 0 #e9e9e9; }
.steps { display: flex; flex-direction: column; width: 30px; border-left: 2px solid #a9a9a9; background: linear-gradient(#fff, #ececec); }
.steps button { flex: 1; display: grid; place-items: center; }
.tolerance { width: 196px; height: 44px; }
.tolerance input { color: #b9b9b9; }
.combo { position: relative; flex: none; border: 2px solid #a9a9a9; border-radius: 6px; overflow: hidden; background: #fff; }
.combo select { width: 100%; height: 100%; padding: 0 0 0 8px; border: 0; appearance: none; background: none; opacity: 1; }
.combo .tri { position: absolute; top: 50%; right: 13px; margin-top: -5px; pointer-events: none; }
.units { width: 200px; height: 48px; margin-left: -2px; border-color: #c2c2c2; background: linear-gradient(#fff, #ebebeb); }
.units select { color: #8f8f8f; }

.body { flex: 1; min-height: 0; display: flex; }
.side { flex: none; display: flex; flex-direction: column; gap: 2px; width: 101px; padding: 10px 0 0 8px; border-right: 2px solid #b1b1b1; background: linear-gradient(90deg, #f5f5f5, #eaeaea); }
.handle.flat { width: 34px; height: 8px; margin: 0 0 5px 30px; }

.panel { flex: none; display: flex; flex-direction: column; width: 468px; padding-left: 2px; }
.panelhead { flex: none; display: flex; align-items: center; gap: 6px; height: 40px; padding: 0 2px 0 8px; }
h2 { flex: 1; font-size: 22px; font-weight: 400; }
.panelhead button, .panelhead svg { display: block; width: 22px; height: 22px; }
.panelhead svg { fill: none; stroke: #737373; stroke-width: 2; }
.panelhead .heavy { stroke-width: 4; }
.paneltools { flex: none; display: flex; align-items: center; gap: 4px; height: 61px; padding: 0 0 3px 9px; }
.tool.small { width: 46px; height: 46px; }
.small .icon { width: 32px; height: 34px; }
.small .corner { bottom: 2px; right: 0; }

.treeframe { flex: 1; min-height: 0; display: flex; border: 1px solid #b1b1b1; background: #fff; }
.tree { flex: 1; overflow: hidden; padding-top: 1px; }
.layer { display: flex; align-items: center; height: 36px; }
.layer.current { background: #dcdcdc; }
.twist { display: grid; place-items: center; width: 42px; height: 36px; margin-right: 5px; }
.raster { width: 26px; height: 26px; margin: 0 14px 0 16px; }
.layer label { font-size: 28px; font-weight: 700; line-height: 34px; }
.layer.current label { color: #000; text-decoration: underline; text-decoration-thickness: 3px; text-decoration-skip-ink: none; text-underline-offset: 3px; }
input[type="checkbox"] { flex: none; display: grid; place-items: center; appearance: none; width: 28px; height: 28px; margin: 0; border: 2px solid #bcbcbc; background: #fff; }
input[type="checkbox"]:checked::before { content: ""; width: 18px; height: 20px; background: #1c1c1c; clip-path: polygon(0 50%, 16% 42%, 38% 76%, 82% 0, 100% 0, 46% 100%, 34% 100%); }
.legend { padding: 0 0 2px 87px; }
.legend p { height: 34px; line-height: 32px; }
.ramp { display: flex; height: 384px; }
.scale { width: 64px; background: linear-gradient(#fff, #000); }
.range { display: flex; flex-direction: column; justify-content: space-between; padding-left: 12px; line-height: 32px; }

.scrollbar { flex: none; display: flex; flex-direction: column; width: 28px; border-left: 1px solid #b1b1b1; }
.scrollbar button { flex: none; display: grid; place-items: center; height: 28px; border-bottom: 2px solid #b5b5b5; background: linear-gradient(90deg, #fff, #f0f0f0); }
.scrollbar .down { border-bottom: 0; border-top: 2px solid #b5b5b5; height: 30px; }
.track { flex: 1; background: #e1e1e1; }
.thumb { height: 42%; border-bottom: 2px solid #b5b5b5; background: linear-gradient(90deg, #fff, #efefef); }

.tabs { flex: none; display: flex; align-items: flex-start; height: 54px; margin-top: 2px; border-top: 2px solid #b1b1b1; }
.tab { width: 146px; height: 47px; padding-top: 2px; border: 2px solid #b9b9b9; border-top: 0; border-left: 0; border-radius: 0 0 6px 6px; background: #dadada; }
.tab.active { width: 129px; height: 53px; margin-top: -2px; padding-top: 4px; border: 2px solid #a9a9a9; border-top: 0; background: linear-gradient(#ebebeb, #f5f5f5); }

.splitter { flex: none; align-self: center; width: 2px; height: 32px; margin: 0 6px; background: radial-gradient(circle at 1px 1px, #b8b8b8 1px, transparent 1px) 0 0 / 6px 6px; }
.canvas { flex: 1; position: relative; margin: 1px 1px 1px 0; border: 1px solid #b4b4b4; background: #e7e7e7; }
.strip { position: absolute; left: 223px; top: 423px; width: 936px; height: 6px; background: linear-gradient(90deg, #000 39%, #484848 43%, #333 46%, #585858 50%, #2a2a2a 55%, #262626 68%, #444 75%, #3c3c3c 78%, #666 82%, #b5b5b5 85%, #d8d8d8 89%, #bbb 90%, #fff 93%, #c4c4c4 95%, #b8b8b8 97%, #959595 100%); }
.strip svg { display: block; width: 100%; height: 100%; }

.status { flex: none; display: flex; align-items: center; height: 60px; padding: 2px 0 0 7px; font-size: 22px; }
.locate { flex: none; display: flex; align-items: center; width: 428px; height: 47px; padding-left: 15px; border: 2px solid #a9a9a9; border-radius: 5px; background: #fff; box-shadow: inset 0 2px 0 #ececec; }
.locate svg { width: 26px; height: 26px; fill: none; stroke: #8a8a8a; stroke-width: 2; }
.locate input { flex: 1; min-width: 0; padding: 0 0 0 14px; border: 0; background: none; font-size: 26px; }
.locate input::placeholder { color: #858585; opacity: 1; }
.clip { flex: none; display: flex; justify-content: center; overflow: hidden; white-space: nowrap; color: #000; }
.coord { width: 88px; margin-left: auto; }
.field { width: 263px; height: 43px; margin-left: 7px; padding: 0; border: 2px solid #a9a9a9; border-radius: 6px; background: #fff; font-size: 23px; text-align: center; box-shadow: inset 0 2px 0 #e9e9e9; }
.status svg { display: block; }
.mouse { width: 32px; height: 32px; margin-left: 8px; }
.scalelabel { width: 30px; margin-left: 25px; }
.scalebox { width: 158px; height: 47px; margin-left: 5px; background: linear-gradient(90deg, #fff 114px, #b1b1b1 114px, #b1b1b1 116px, #f3f3f3 116px); }
.scalebox select { padding-left: 6px; font-size: 23px; }
.lock { width: 24px; height: 30px; margin-left: 24px; }
.maglabel { width: 72px; margin-left: 18px; }
.mag { width: 186px; height: 45px; margin-left: 6px; }
.rotlabel { width: 59px; margin-left: 19px; }
.rot { width: 185px; height: 43px; margin-left: 18px; }
.render { flex: none; display: flex; align-items: center; gap: 11px; width: 144px; margin-left: 13px; }
.crs { flex: none; display: flex; align-items: center; gap: 4px; width: 206px; color: #000; }
.crs svg { width: 32px; height: 28px; }
.bubble { width: 32px; height: 30px; }
.grip { align-self: flex-end; width: 22px; height: 22px; margin: 0 3px 3px 34px; }
</style>
